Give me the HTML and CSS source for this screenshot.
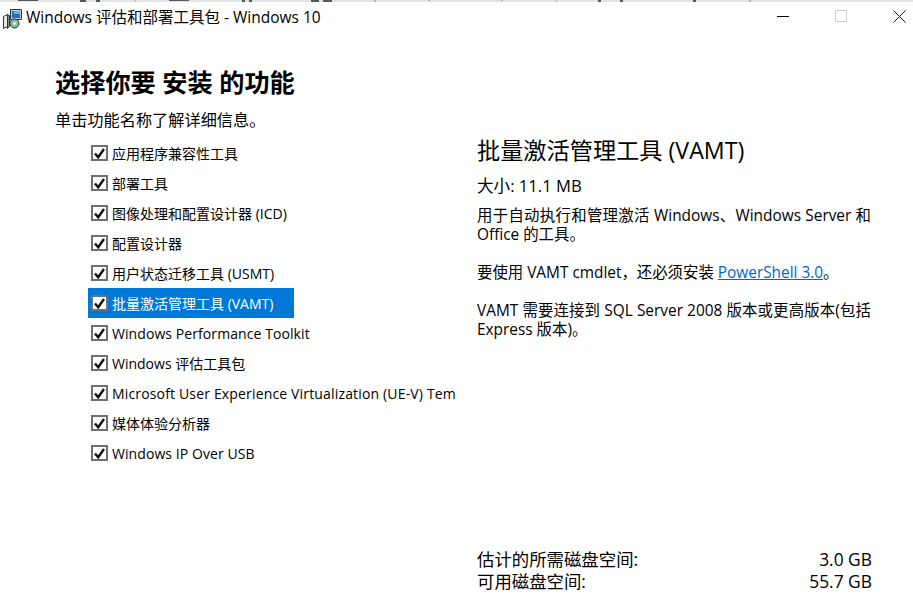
FILE: index.html
```html
<!DOCTYPE html>
<html lang="zh-CN">
<head>
<meta charset="utf-8">
<title>Windows 评估和部署工具包 - Windows 10</title>
<link rel="stylesheet" href="styles.css">
</head>
<body>
<div class="window">
  <svg class="edge" width="913" height="2" viewBox="0 0 913 2">
    <path d="M18 0h20v1H18zM80 0h6v2h-6zM96 0h4v2h-4zM169 0h20v1h-20zM242 0h3v2h-3zM249 0h3v2h-3zM311 0h8v2h-8zM323 0h9v2h-9zM598 0h3v2h-3zM620 0h3v2h-3zM693 0h3v2h-3z" fill="#55585f"/>
    <path d="M135 0h1v2h-1zM374 0h2v2h-2zM428 0h2v1h-2zM501 0h2v1h-2zM556 0h1v2h-1zM749 0h2v2h-2z" fill="#b5b5b5"/>
  </svg>
  <header class="titlebar">
    <svg class="app-icon" width="21" height="21" viewBox="0 0 21 21">
      <path d="M1.5 8.5l4-2v12l-4 2z" fill="#e8e8e8" stroke="#333"/>
      <path d="M5.5 6.5l2 1v11l-2 2z" fill="#8a8f96" stroke="#333"/>
      <path d="M8.5 1.5h11v10h-11z" fill="#c3c9d2" stroke="#2b3440"/>
      <path d="M10 3h8v7h-8z" fill="#1e6fc4"/>
      <path d="M12 3h6v3h-6z" fill="#54b6ec"/>
      <circle cx="12.5" cy="15.5" r="4.5" fill="#7cc2a8" stroke="#333"/>
      <circle cx="12.5" cy="15.5" r="1.3" fill="#fff"/>
    </svg>
    <span class="title">Windows 评估和部署工具包 - Windows 10</span>
    <div class="caption">
      <svg width="13" height="13" viewBox="0 0 13 13"><path d="M0 6.5h12" stroke="#000"/></svg>
      <svg width="13" height="13" viewBox="0 0 13 13"><path d="M.5.5h11v11H.5z" fill="none" stroke="#ccc"/></svg>
      <svg width="13" height="13" viewBox="0 0 13 13"><path d="M.5.5l12 12M12.5.5l-12 12" stroke="#111"/></svg>
    </div>
  </header>
  <main class="content">
    <section class="left">
      <h1>选择你要 安装 的功能</h1>
      <p class="hint">单击功能名称了解详细信息。</p>
      <ul class="features">
        <li class="feature"><span class="check"><svg width="13" height="13" viewBox="0 0 13 13"><path d="M2 6.5l3.2 3.7L11 2" fill="none" stroke="#111" stroke-width="2.4"/></svg></span><span class="name">应用程序兼容性工具</span></li>
        <li class="feature"><span class="check"><svg width="13" height="13" viewBox="0 0 13 13"><path d="M2 6.5l3.2 3.7L11 2" fill="none" stroke="#111" stroke-width="2.4"/></svg></span><span class="name">部署工具</span></li>
        <li class="feature"><span class="check"><svg width="13" height="13" viewBox="0 0 13 13"><path d="M2 6.5l3.2 3.7L11 2" fill="none" stroke="#111" stroke-width="2.4"/></svg></span><span class="name">图像处理和配置设计器 (ICD)</span></li>
        <li class="feature"><span class="check"><svg width="13" height="13" viewBox="0 0 13 13"><path d="M2 6.5l3.2 3.7L11 2" fill="none" stroke="#111" stroke-width="2.4"/></svg></span><span class="name">配置设计器</span></li>
        <li class="feature"><span class="check"><svg width="13" height="13" viewBox="0 0 13 13"><path d="M2 6.5l3.2 3.7L11 2" fill="none" stroke="#111" stroke-width="2.4"/></svg></span><span class="name">用户状态迁移工具 (USMT)</span></li>
        <li class="feature selected"><span class="check"><svg width="13" height="13" viewBox="0 0 13 13"><path d="M2 6.5l3.2 3.7L11 2" fill="none" stroke="#111" stroke-width="2.4"/></svg></span><span class="name">批量激活管理工具 (VAMT)</span></li>
        <li class="feature"><span class="check"><svg width="13" height="13" viewBox="0 0 13 13"><path d="M2 6.5l3.2 3.7L11 2" fill="none" stroke="#111" stroke-width="2.4"/></svg></span><span class="name latin">Windows Performance Toolkit</span></li>
        <li class="feature"><span class="check"><svg width="13" height="13" viewBox="0 0 13 13"><path d="M2 6.5l3.2 3.7L11 2" fill="none" stroke="#111" stroke-width="2.4"/></svg></span><span class="name">Windows 评估工具包</span></li>
        <li class="feature"><span class="check"><svg width="13" height="13" viewBox="0 0 13 13"><path d="M2 6.5l3.2 3.7L11 2" fill="none" stroke="#111" stroke-width="2.4"/></svg></span><span class="name long">Microsoft User Experience Virtualization (UE-V) Templates</span></li>
        <li class="feature"><span class="check"><svg width="13" height="13" viewBox="0 0 13 13"><path d="M2 6.5l3.2 3.7L11 2" fill="none" stroke="#111" stroke-width="2.4"/></svg></span><span class="name">媒体体验分析器</span></li>
        <li class="feature"><span class="check"><svg width="13" height="13" viewBox="0 0 13 13"><path d="M2 6.5l3.2 3.7L11 2" fill="none" stroke="#111" stroke-width="2.4"/></svg></span><span class="name latin">Windows IP Over USB</span></li>
      </ul>
    </section>
    <section class="right">
      <div class="details">
        <h2>批量激活管理工具 (VAMT)</h2>
        <p class="size">大小: 11.1 MB</p>
        <p class="desc">用于自动执行和管理激活 Windows、Windows Server 和 Office 的工具。</p>
        <p class="desc">要使用 VAMT cmdlet，还必须安装 <a href="#">PowerShell 3.0</a>。</p>
        <p class="desc">VAMT 需要连接到 SQL Server 2008 版本或更高版本(包括 Express 版本)。</p>
      </div>
      <dl class="disk">
        <div class="disk-row"><dt>估计的所需磁盘空间:</dt><dd>3.0 GB</dd></div>
        <div class="disk-row"><dt>可用磁盘空间:</dt><dd>55.7 GB</dd></div>
      </dl>
    </section>
  </main>
</div>
</body>
</html>
```

FILE: styles.css
```css
* { box-sizing: border-box; }
html, body { margin: 0; height: 100%; }
body {
  background: #fff;
  color: #000;
  font-family: "Open Sans", "Noto Sans CJK SC", sans-serif;
  overflow: hidden;
}
.window { width: 913px; height: 604px; display: flex; flex-direction: column; }
.edge { display: block; flex: none; height: 2px; background: #e3e3e3; }
.titlebar { height: 30px; display: flex; align-items: center; padding: 0 7px 0 2px; }
.app-icon { flex: none; margin-top: 3px; }
.title { margin-left: 3px; font-size: 15.5px; line-height: 30px; white-space: nowrap; }
.caption { margin-left: auto; display: flex; gap: 45px; margin-top: -2px; }
.content { flex: 1; display: flex; min-height: 0; }
.left { width: 456px; flex: none; padding-left: 55px; overflow: hidden; }
h1 { margin: 33px 0 0; font-size: 25.2px; line-height: 34px; font-weight: 700; }
.hint { margin: 11px 0 0; font-size: 16.2px; line-height: 20px; }
.features { list-style: none; margin: 8px 0 0 33px; padding: 0; }
.feature { height: 30px; display: flex; align-items: center; white-space: nowrap; font-size: 14px; }
.check {
  width: 17px; height: 16px; margin-left: 3px; flex: none;
  border: 2px solid #707070; background: #fff;
  display: flex; align-items: center; justify-content: center;
}
.name { margin-left: 4px; }
.latin { letter-spacing: .08px; }
.long { letter-spacing: .16px; }
.selected { width: 206px; background: #0078d7; color: #fff; }
.right { flex: 1; display: flex; flex-direction: column; padding: 0 42px 12px 21px; }
.details { flex: 1; }
h2 { margin: 102px 0 0; font-size: 23.2px; line-height: 32px; font-weight: 400; }
.size { margin: 9px 0 0; font-size: 16.6px; line-height: 22px; }
.desc { margin: 9px 0 0; font-size: 15.4px; line-height: 19px; text-align: justify; }
.desc + .desc { margin-top: 19px; }
a { color: #0066cc; }
.disk { margin: 0 -1px 0 0; font-size: 17.4px; line-height: 22px; }
.disk-row { display: flex; justify-content: space-between; }
.disk dd { margin: 0; }
```
